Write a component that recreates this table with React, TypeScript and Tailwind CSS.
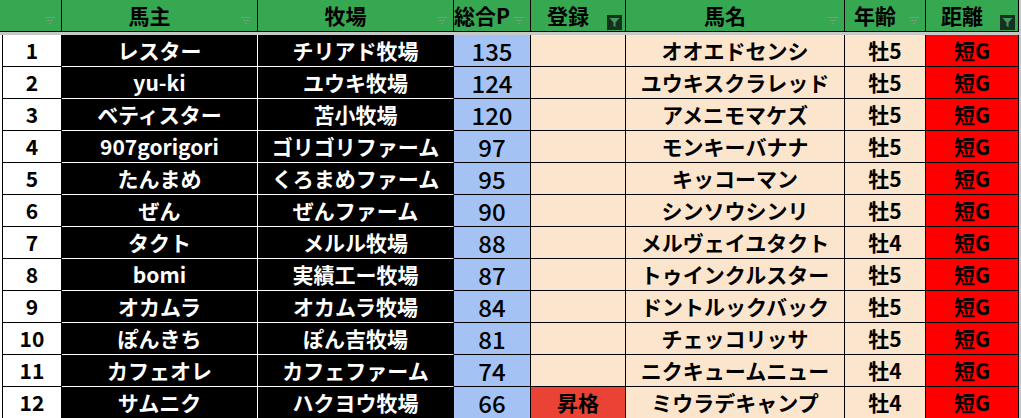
import React from "react";

const owners = ["レスター", "yu-ki", "ベティスター", "907gorigori", "たんまめ", "ぜん", "タクト", "bomi", "オカムラ", "ぽんきち", "カフェオレ", "サムニク"];
const farms = ["チリアド牧場", "ユウキ牧場", "苫小牧場", "ゴリゴリファーム", "くろまめファーム", "ぜんファーム", "メルル牧場", "実績工ー牧場", "オカムラ牧場", "ぽん吉牧場", "カフェファーム", "ハクヨウ牧場"];
const points = [135, 124, 120, 97, 95, 90, 88, 87, 84, 81, 74, 66];
const horses = ["オオエドセンシ", "ユウキスクラレッド", "アメニモマケズ", "モンキーバナナ", "キッコーマン", "シンソウシンリ", "メルヴェイユタクト", "トゥインクルスター", "ドントルックバック", "チェッコリッサ", "ニクキュームニュー", "ミウラデキャンプ"];
const ages = ["牡5", "牡5", "牡5", "牡5", "牡5", "牡5", "牡4", "牡5", "牡5", "牡5", "牡4", "牡4"];

function FilterMark() {
    return (
        <svg width="10" height="8" viewBox="0 0 10 8" className="absolute right-[6px] bottom-[6px]">
            <path d="M0 0.5h10M2 3.5h6M4 6.5h2" stroke="#7c9a86" strokeWidth="1" />
        </svg>
    );
}

function FilterOn() {
    return (
        <div className="absolute right-[3px] bottom-[1px] w-[15px] h-[15px] bg-[#17301f] flex items-center justify-center">
            <svg width="11" height="11" viewBox="0 0 11 11">
                <path d="M0.5 1h10L6.5 5.5V10L4.5 9V5.5Z" fill="#3f9d5c" />
            </svg>
        </div>
    );
}

function Head({ w, label, on }: { w: string; label?: string; on?: boolean }) {
    return (
        <div className={`${w} relative h-full border-r border-black flex items-center justify-center pr-[20px] pt-[1px] text-[21px] font-bold text-black`}>
            {label}
            {on ? <FilterOn /> : <FilterMark />}
        </div>
    );
}

export default function App() {
    return (
        <div className="w-[1021px] h-[418px] overflow-hidden bg-[#c8c8c8]" style={{ fontFamily: '"Noto Sans CJK JP", "Noto Sans", sans-serif' }}>
            <div className="flex h-[32px] w-[1019px] bg-[#36a852] border-b border-black">
                <Head w="w-[62px]" />
                <Head w="w-[196px]" label="馬主" />
                <Head w="w-[196px]" label="牧場" />
                <Head w="w-[77px]" label="総合P" />
                <Head w="w-[95px]" label="登録" on />
                <Head w="w-[219px]" label="馬名" />
                <Head w="w-[81px]" label="年齢" />
                <Head w="w-[93px]" label="距離" on />
            </div>
            <div className="h-[3px]" />
            {owners.map((owner, i) => (
                <div key={i} className="flex h-[32px] w-[1019px] text-[21px] font-bold leading-none">
                    <div className="w-[2px] bg-white" />
                    <div className="w-[60px] bg-white border-x border-b border-black flex items-center justify-center text-black">{i + 1}</div>
                    <div className="w-[196px] bg-black border-r border-b border-white flex items-center justify-center text-white">{owner}</div>
                    <div className="w-[196px] bg-black border-r border-b border-r-black border-b-white flex items-center justify-center text-white">{farms[i]}</div>
                    <div className="w-[77px] bg-[#a4c2f4] border-r border-b border-black flex items-center justify-center text-[24px] font-medium text-black">{points[i]}</div>
                    {i === 11 ? (
                        <div className="w-[95px] bg-[#ea4335] border-r border-b border-black flex items-center justify-center text-black">昇格</div>
                    ) : (
                        <div className="w-[95px] bg-[#fce5cd] border-r border-b border-black" />
                    )}
                    <div className="w-[219px] bg-[#fce5cd] border-r border-b border-black flex items-center justify-center text-black">{horses[i]}</div>
                    <div className="w-[81px] bg-[#fce5cd] border-r border-b border-black flex items-center justify-center text-black">{ages[i]}</div>
                    <div className="w-[93px] bg-[#ff0000] border-r border-b border-black flex items-center justify-center text-black">短G</div>
                </div>
            ))}
        </div>
    );
}
